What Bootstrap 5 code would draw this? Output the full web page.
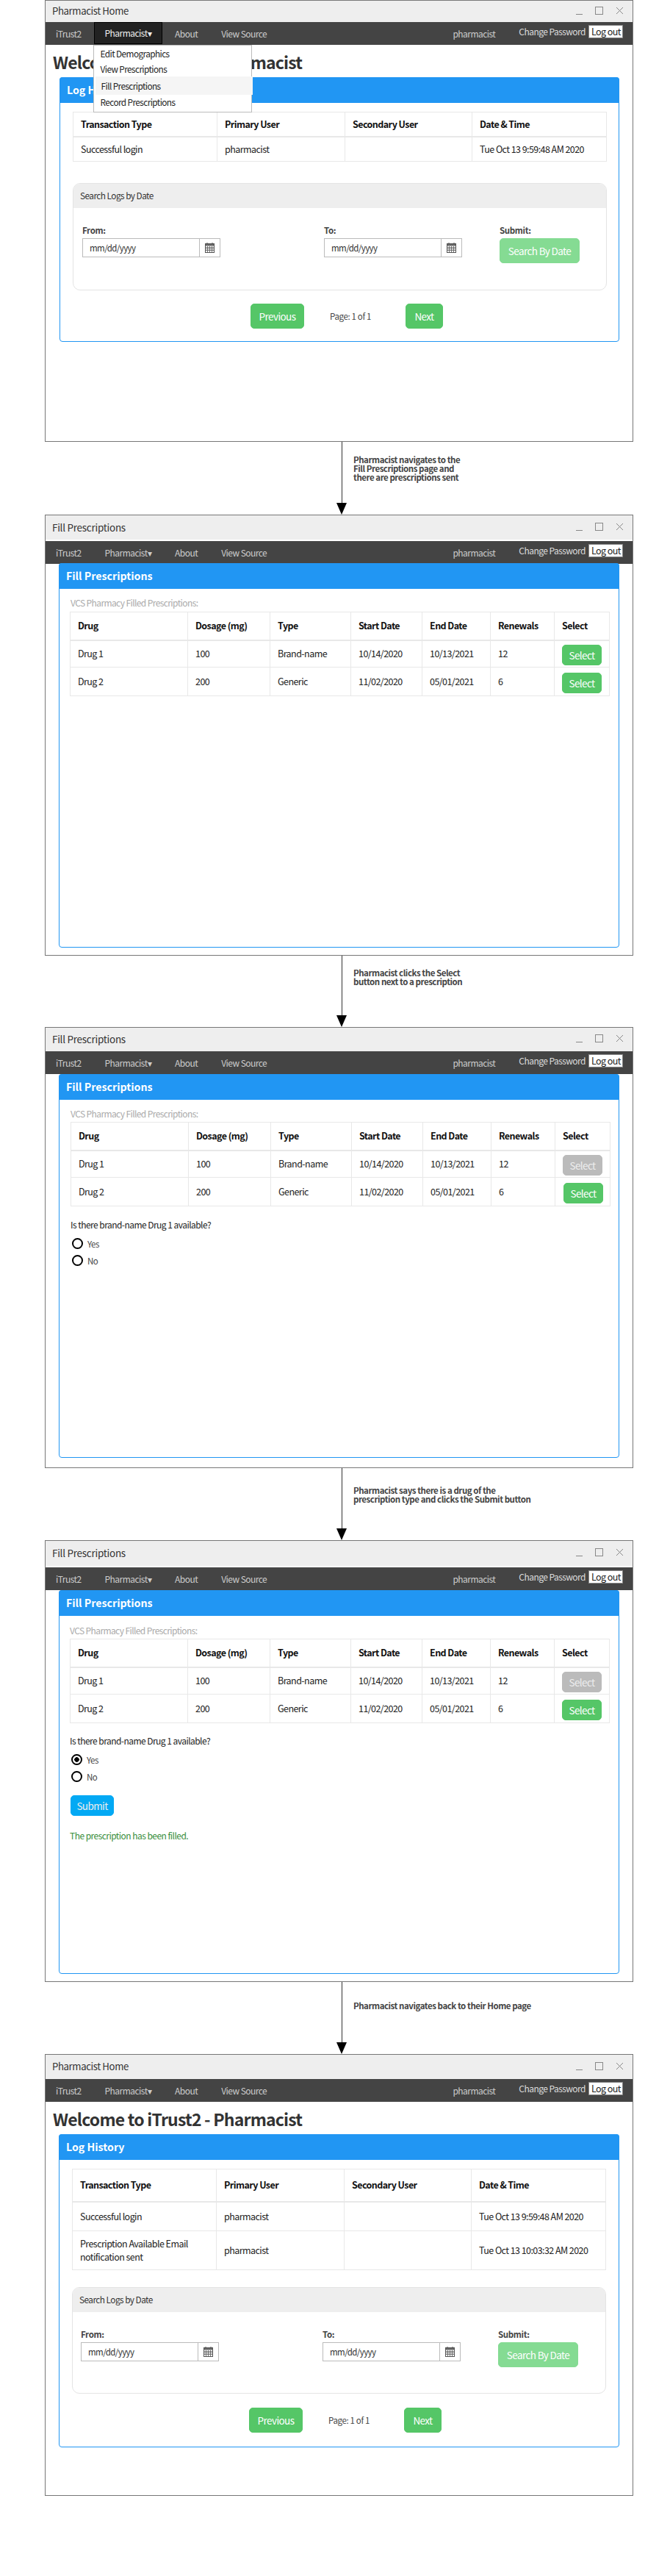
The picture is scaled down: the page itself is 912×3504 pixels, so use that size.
<!DOCTYPE html>
<html lang="en">
<head>
<meta charset="utf-8">
<title>iTrust2 flow</title>
<link href="https://cdn.jsdelivr.net/npm/bootstrap@5.3.0/dist/css/bootstrap.min.css" rel="stylesheet">
<style>
html,body{margin:0;background:#fff}
body{font-family:"Noto Sans CJK SC","Noto Sans",sans-serif;font-size:12px;line-height:18px;color:#222;width:912px;height:3504px;overflow:hidden}
body *{letter-spacing:-.045em}
.app-win{margin-left:61px;width:801px;border:1px solid #777;background:#fff;overflow:hidden}
.shot1{height:601px;--tb:29px;--gap:0px}
.shot2{height:600px;--tb:33px;--gap:2px}
.shot3{height:600px;--tb:32px;--gap:0px}
.shot4{height:601px;--tb:34px;--gap:2px}
.shot5{height:601px;--tb:33px;--gap:0px}
.win-title{height:var(--tb);margin-bottom:var(--gap);background:#eee;padding:0 12px 2px 9px;color:#333}
.win-title span{font-size:13.5px;letter-spacing:-.02em}
.shot1 .win-title span,.shot5 .win-title span{font-size:13.2px;letter-spacing:-.03em}
.win-nav{height:31px;background:#444;color:#ccc;position:relative}
.win-nav .nav-items{padding-left:14px}
.win-nav .nav-items .nav-link{padding:0;color:#ccc;line-height:31px;margin-right:32px;white-space:nowrap;font-size:12px}
.win-nav .nav-items .nav-link.is-open{color:#eee;background:#222;outline:1px solid #000;outline-offset:-1px;margin:0 17px 0 -15px;padding:0 15px;line-height:30px;height:30px}
.nav-side{padding-right:13px;margin-left:auto;align-items:center;font-size:12px}
.nav-user{color:#ccc;margin-right:32px;line-height:31px}
.nav-pass{color:#ddd;margin-right:4px;margin-top:-6px}
.nav-out{background:#fff;color:#222;border:1px solid #888;height:18px;line-height:16px;padding:0 3px;width:47px;font-size:12.5px;margin-top:-5px;white-space:nowrap}
.drop-wrap{position:relative}
.win-nav .drop-wrap .dropdown-menu{display:block;position:absolute;top:31px;left:-16px;width:216px;height:92px;margin:0;padding:0;border:1px solid #bbb;border-radius:0}
.drop-wrap .dropdown-item{padding:0 0 0 9px;color:#222;height:21px;line-height:21px;font-size:11.8px;letter-spacing:-.05em}
.drop-wrap .dropdown-item.is-hover{background:#f5f5f5;margin-left:2px;padding-left:8px;height:25px;line-height:25px}
.drop-wrap li:last-child .dropdown-item{margin-top:-1px}
.page-head{font-size:23px;font-weight:700;color:#333;line-height:30px;margin:0;padding-left:10px;letter-spacing:-.035em}
.shot1 .page-head,.shot5 .page-head{padding-top:8px;height:44px}
.log-box{margin-left:18px;width:763px;border:1px solid #2196f3;border-radius:4px;background:#fff}
.log-head{height:35px;background:#2196f3;color:#fff;font-weight:700;font-size:14.2px;letter-spacing:0;line-height:34px;padding-left:10px;margin:-1px -1px 0;border-radius:4px 4px 0 0}
.shot1 .log-box{height:360px;margin-left:19px;width:762px}
.shot5 .log-box{height:426px}
.shot2 .log-box{height:523px;margin-top:-1px}
.shot3 .log-box{height:522px}
.shot4 .log-box{height:522px}
.data-tbl{table-layout:fixed;border-collapse:collapse;margin:0;--bs-table-color:#222;--bs-table-border-color:#eee;width:auto}
.data-tbl th,.data-tbl td{padding:0 10px;vertical-align:middle;border:1px solid #e8e8e8;line-height:18px;font-size:12.5px;color:#222}
.data-tbl thead th{border-bottom-width:2px;color:#111;font-weight:700}
.log-tbl{width:726px;margin:12px 0 0 17px}
.log-tbl col:nth-child(1){width:196px}
.log-tbl col:nth-child(2){width:174px}
.log-tbl col:nth-child(3){width:173px}
.log-tbl col:nth-child(4){width:183px}
.shot1 .log-tbl thead tr{height:33px}
.shot1 .log-tbl tbody tr{height:34px}
.shot5 .log-tbl thead tr{height:44px}
.shot5 .log-tbl tbody tr:nth-child(1){height:40px}
.shot5 .log-tbl tbody tr:nth-child(2){height:53px}
.search-panel{margin-left:17px;width:727px;border:1px solid #e4e4e4;border-radius:10px;overflow:hidden}
.shot1 .search-panel{margin-top:29px;height:146px}
.shot5 .search-panel{margin-top:23px;height:145px}
.panel-head{height:33px;background:#eee;font-size:11.8px;line-height:32px;padding-left:9px;color:#333}
.field-row{padding:22px 0 0 12px}
.shot5 .field-row{padding-left:11px}
.field-a{width:329px}
.field-b{width:239px}
.field-lbl{font-size:11.5px;font-weight:700;color:#444;line-height:16px;height:19px;margin:0;display:block;letter-spacing:-.03em}
.date-grp{width:188px;height:26px;flex-wrap:nowrap}
.date-grp .form-control{height:26px;min-height:0;border:1px solid #bbb;border-radius:0;padding:0 9px;font-size:11.5px;letter-spacing:-.05em;color:#333;line-height:24px;box-shadow:none}
.date-grp .input-group-text{height:26px;width:29px;background:#fff;border:1px solid #bbb;border-radius:0;padding:0 0 0 7px}
.green-btn{--bs-btn-bg:#55c667;--bs-btn-border-color:#55c667;--bs-btn-color:#fff;--bs-btn-hover-bg:#55c667;--bs-btn-hover-color:#fff;padding:0;height:34px;line-height:32px;font-size:13.5px;border-radius:5px}
.green-btn.is-faded{background:#85db93;border-color:#85db93;color:#fff;opacity:1;width:109px}
.pager{margin-top:18px;padding-left:259px;align-items:center}
.shot5 .pager{margin-top:19px;padding-left:258px}
.pg-prev{width:73px}
.pg-next{width:51px}
.pg-label{font-size:11.5px;letter-spacing:-.03em;color:#444;width:138px;padding-left:35px;line-height:34px}
.rx-note{color:#aaa;font-size:12px;letter-spacing:-.05em;line-height:18px;margin:0;padding:10px 0 0 15px;height:31px}
.shot3 .rx-note{height:30px}
.shot4 .rx-note{height:31px;padding-top:11px;padding-left:14px}
.rx-tbl{width:734px;margin-left:14px}
.shot3 .rx-tbl{margin-left:15px}
.rx-tbl col:nth-child(1){width:160px}
.rx-tbl col:nth-child(2){width:112px}
.rx-tbl col:nth-child(3){width:110px}
.rx-tbl col:nth-child(4){width:97px}
.rx-tbl col:nth-child(5){width:93px}
.rx-tbl col:nth-child(6){width:87px}
.rx-tbl col:nth-child(7){width:75px}
.rx-tbl thead tr{height:38px}
.rx-tbl tbody tr:nth-child(1){height:37px}
.rx-tbl tbody tr:nth-child(2){height:39px}
.pick-btn{width:54px;height:28px;line-height:26px;display:block;margin-top:3px}
.pick-btn.is-used{background:#bbb;border-color:#bbb;color:#eee;opacity:1}
.shift-right{margin-left:1px}
.ask-wrap{padding:16px 0 0 15px}
.shot4 .ask-wrap{padding:15px 0 0 14px}
.ask-line{line-height:18px;margin:0 0 9px}
.pick-row{margin:0 0 8px;padding:0;min-height:0;display:flex;align-items:center;height:15px;font-size:11.5px;color:#444}
.pick-row .form-check-input{float:none;width:15px;height:15px;margin:0 6px 0 2px;border:2px solid #000;background:#fff;box-shadow:none;flex:none}
.pick-row .form-check-input:checked{background:radial-gradient(circle,#000 0 3px,#fff 3.5px);border-color:#000}
.send-btn{--bs-btn-bg:#03a9f4;--bs-btn-border-color:#03a9f4;--bs-btn-color:#eee;padding:0;width:59px;height:28px;line-height:26px;font-size:13.5px;border-radius:5px;margin:18px 0 0 1px;display:block}
.done-line{color:#388e3c;line-height:18px;margin:18px 0 0}
.flow-link{margin-left:458px;font-size:11.5px;line-height:12px;font-weight:700;color:#444}
.flow-a{height:99px}.flow-b{height:97px}.flow-c,.flow-d{height:98px}
.flow-axis{width:14px;align-items:center}
.flow-rule{width:1px;background:#333;flex:1 1 auto}
.flow-text{margin-left:9px;padding-top:18px;white-space:nowrap;letter-spacing:-.04em}
.flow-b .flow-text{padding-top:17px}
.flow-c .flow-text{padding-top:24px}
.flow-d .flow-text{padding-top:26px}
</style>
</head>
<body>

<section class="app-win shot1">
  <div class="win-title d-flex align-items-center justify-content-between"><span>Pharmacist Home</span>
    <svg width="66" height="12" viewBox="0 0 66 12" fill="none" stroke="#888"><path d="M1 10.5h9"/><rect x="27.5" y=".5" width="10" height="10"/><path d="M56 1l9 9M65 1l-9 9"/></svg>
  </div>
  <nav class="win-nav navbar navbar-expand p-0 flex-nowrap">
    <div class="navbar-nav nav-items flex-row">
      <a class="nav-link" href="#">iTrust2</a>
      <div class="drop-wrap">
        <a class="nav-link is-open" href="#">Pharmacist▾</a>
        <ul class="dropdown-menu show list-unstyled">
          <li><a class="dropdown-item" href="#">Edit Demographics</a></li>
          <li><a class="dropdown-item" href="#">View Prescriptions</a></li>
          <li><a class="dropdown-item is-hover" href="#">Fill Prescriptions</a></li>
          <li><a class="dropdown-item" href="#">Record Prescriptions</a></li>
        </ul>
      </div>
      <a class="nav-link" href="#">About</a>
      <a class="nav-link" href="#">View Source</a>
    </div>
    <div class="nav-side d-flex"><span class="nav-user">pharmacist</span><span class="nav-pass">Change Password</span><span class="nav-out">Log out</span></div>
  </nav>
  <h1 class="page-head">Welcome to iTrust2 - Pharmacist</h1>
  <div class="card log-box">
    <div class="log-head">Log History</div>
    <table class="table data-tbl log-tbl">
      <colgroup><col><col><col><col></colgroup>
      <thead><tr><th>Transaction Type</th><th>Primary User</th><th>Secondary User</th><th>Date &amp; Time</th></tr></thead>
      <tbody><tr><td>Successful login</td><td>pharmacist</td><td></td><td>Tue Oct 13 9:59:48 AM 2020</td></tr></tbody>
    </table>
    <div class="search-panel">
      <div class="panel-head">Search Logs by Date</div>
      <div class="field-row d-flex">
        <div class="field-a"><label class="field-lbl">From:</label>
          <div class="input-group date-grp"><input class="form-control" type="text" value="mm/dd/yyyy"><span class="input-group-text"><svg width="13" height="14" viewBox="0 0 13 14"><path d="M3 0v2M10 0v2" stroke="#555"/><rect x=".5" y="1.5" width="12" height="12" fill="#fff" stroke="#555"/><rect x="1" y="2" width="11" height="2.5" fill="#666"/><path d="M1 6.5h11M1 8.5h11M1 10.5h11M3.5 5v8M6.5 5v8M9.5 5v8" stroke="#666" stroke-width=".9"/></svg></span></div>
        </div>
        <div class="field-b"><label class="field-lbl">To:</label>
          <div class="input-group date-grp"><input class="form-control" type="text" value="mm/dd/yyyy"><span class="input-group-text"><svg width="13" height="14" viewBox="0 0 13 14"><path d="M3 0v2M10 0v2" stroke="#555"/><rect x=".5" y="1.5" width="12" height="12" fill="#fff" stroke="#555"/><rect x="1" y="2" width="11" height="2.5" fill="#666"/><path d="M1 6.5h11M1 8.5h11M1 10.5h11M3.5 5v8M6.5 5v8M9.5 5v8" stroke="#666" stroke-width=".9"/></svg></span></div>
        </div>
        <div><label class="field-lbl">Submit:</label><button class="btn green-btn is-faded" disabled>Search By Date</button></div>
      </div>
    </div>
    <div class="pager d-flex"><button class="btn green-btn pg-prev">Previous</button><span class="pg-label">Page: 1 of 1</span><button class="btn green-btn pg-next">Next</button></div>
  </div>
</section>

<div class="flow-link flow-a d-flex">
  <div class="flow-axis d-flex flex-column"><div class="flow-rule"></div><svg width="14" height="16" viewBox="0 0 14 16"><path d="M0 0h14L7 16z" fill="#000"/></svg></div>
  <div class="flow-text">Pharmacist navigates to the<br>Fill Prescriptions page and<br>there are prescriptions sent</div>
</div>

<section class="app-win shot2">
  <div class="win-title d-flex align-items-center justify-content-between"><span>Fill Prescriptions</span>
    <svg width="66" height="12" viewBox="0 0 66 12" fill="none" stroke="#888"><path d="M1 10.5h9"/><rect x="27.5" y=".5" width="10" height="10"/><path d="M56 1l9 9M65 1l-9 9"/></svg>
  </div>
  <nav class="win-nav navbar navbar-expand p-0 flex-nowrap">
    <div class="navbar-nav nav-items flex-row">
      <a class="nav-link" href="#">iTrust2</a><a class="nav-link" href="#">Pharmacist▾</a><a class="nav-link" href="#">About</a><a class="nav-link" href="#">View Source</a>
    </div>
    <div class="nav-side d-flex"><span class="nav-user">pharmacist</span><span class="nav-pass">Change Password</span><span class="nav-out">Log out</span></div>
  </nav>
  <div class="card log-box">
    <div class="log-head">Fill Prescriptions</div>
    <p class="rx-note">VCS Pharmacy Filled Prescriptions:</p>
    <table class="table data-tbl rx-tbl">
      <colgroup><col><col><col><col><col><col><col></colgroup>
      <thead><tr><th>Drug</th><th>Dosage (mg)</th><th>Type</th><th>Start Date</th><th>End Date</th><th>Renewals</th><th>Select</th></tr></thead>
      <tbody>
        <tr><td>Drug 1</td><td>100</td><td>Brand-name</td><td>10/14/2020</td><td>10/13/2021</td><td>12</td><td><button class="btn green-btn pick-btn">Select</button></td></tr>
        <tr><td>Drug 2</td><td>200</td><td>Generic</td><td>11/02/2020</td><td>05/01/2021</td><td>6</td><td><button class="btn green-btn pick-btn">Select</button></td></tr>
      </tbody>
    </table>
  </div>
</section>

<div class="flow-link flow-b d-flex">
  <div class="flow-axis d-flex flex-column"><div class="flow-rule"></div><svg width="14" height="16" viewBox="0 0 14 16"><path d="M0 0h14L7 16z" fill="#000"/></svg></div>
  <div class="flow-text">Pharmacist clicks the Select<br>button next to a prescription</div>
</div>

<section class="app-win shot3">
  <div class="win-title d-flex align-items-center justify-content-between"><span>Fill Prescriptions</span>
    <svg width="66" height="12" viewBox="0 0 66 12" fill="none" stroke="#888"><path d="M1 10.5h9"/><rect x="27.5" y=".5" width="10" height="10"/><path d="M56 1l9 9M65 1l-9 9"/></svg>
  </div>
  <nav class="win-nav navbar navbar-expand p-0 flex-nowrap">
    <div class="navbar-nav nav-items flex-row">
      <a class="nav-link" href="#">iTrust2</a><a class="nav-link" href="#">Pharmacist▾</a><a class="nav-link" href="#">About</a><a class="nav-link" href="#">View Source</a>
    </div>
    <div class="nav-side d-flex"><span class="nav-user">pharmacist</span><span class="nav-pass">Change Password</span><span class="nav-out">Log out</span></div>
  </nav>
  <div class="card log-box">
    <div class="log-head">Fill Prescriptions</div>
    <p class="rx-note">VCS Pharmacy Filled Prescriptions:</p>
    <table class="table data-tbl rx-tbl">
      <colgroup><col><col><col><col><col><col><col></colgroup>
      <thead><tr><th>Drug</th><th>Dosage (mg)</th><th>Type</th><th>Start Date</th><th>End Date</th><th>Renewals</th><th>Select</th></tr></thead>
      <tbody>
        <tr><td>Drug 1</td><td>100</td><td>Brand-name</td><td>10/14/2020</td><td>10/13/2021</td><td>12</td><td><button class="btn green-btn pick-btn is-used" disabled>Select</button></td></tr>
        <tr><td>Drug 2</td><td>200</td><td>Generic</td><td>11/02/2020</td><td>05/01/2021</td><td>6</td><td><button class="btn green-btn pick-btn shift-right">Select</button></td></tr>
      </tbody>
    </table>
    <div class="ask-wrap">
      <p class="ask-line">Is there brand-name Drug 1 available?</p>
      <div class="form-check pick-row"><input class="form-check-input" type="radio" name="a3"><label class="form-check-label">Yes</label></div>
      <div class="form-check pick-row"><input class="form-check-input" type="radio" name="a3"><label class="form-check-label">No</label></div>
    </div>
  </div>
</section>

<div class="flow-link flow-c d-flex">
  <div class="flow-axis d-flex flex-column"><div class="flow-rule"></div><svg width="14" height="16" viewBox="0 0 14 16"><path d="M0 0h14L7 16z" fill="#000"/></svg></div>
  <div class="flow-text">Pharmacist says there is a drug of the<br>prescription type and clicks the Submit button</div>
</div>

<section class="app-win shot4">
  <div class="win-title d-flex align-items-center justify-content-between"><span>Fill Prescriptions</span>
    <svg width="66" height="12" viewBox="0 0 66 12" fill="none" stroke="#888"><path d="M1 10.5h9"/><rect x="27.5" y=".5" width="10" height="10"/><path d="M56 1l9 9M65 1l-9 9"/></svg>
  </div>
  <nav class="win-nav navbar navbar-expand p-0 flex-nowrap">
    <div class="navbar-nav nav-items flex-row">
      <a class="nav-link" href="#">iTrust2</a><a class="nav-link" href="#">Pharmacist▾</a><a class="nav-link" href="#">About</a><a class="nav-link" href="#">View Source</a>
    </div>
    <div class="nav-side d-flex"><span class="nav-user">pharmacist</span><span class="nav-pass">Change Password</span><span class="nav-out">Log out</span></div>
  </nav>
  <div class="card log-box">
    <div class="log-head">Fill Prescriptions</div>
    <p class="rx-note">VCS Pharmacy Filled Prescriptions:</p>
    <table class="table data-tbl rx-tbl">
      <colgroup><col><col><col><col><col><col><col></colgroup>
      <thead><tr><th>Drug</th><th>Dosage (mg)</th><th>Type</th><th>Start Date</th><th>End Date</th><th>Renewals</th><th>Select</th></tr></thead>
      <tbody>
        <tr><td>Drug 1</td><td>100</td><td>Brand-name</td><td>10/14/2020</td><td>10/13/2021</td><td>12</td><td><button class="btn green-btn pick-btn is-used" disabled>Select</button></td></tr>
        <tr><td>Drug 2</td><td>200</td><td>Generic</td><td>11/02/2020</td><td>05/01/2021</td><td>6</td><td><button class="btn green-btn pick-btn">Select</button></td></tr>
      </tbody>
    </table>
    <div class="ask-wrap">
      <p class="ask-line">Is there brand-name Drug 1 available?</p>
      <div class="form-check pick-row"><input class="form-check-input" type="radio" name="a4" checked><label class="form-check-label">Yes</label></div>
      <div class="form-check pick-row"><input class="form-check-input" type="radio" name="a4"><label class="form-check-label">No</label></div>
      <button class="btn send-btn">Submit</button>
      <p class="done-line">The prescription has been filled.</p>
    </div>
  </div>
</section>

<div class="flow-link flow-d d-flex">
  <div class="flow-axis d-flex flex-column"><div class="flow-rule"></div><svg width="14" height="16" viewBox="0 0 14 16"><path d="M0 0h14L7 16z" fill="#000"/></svg></div>
  <div class="flow-text">Pharmacist navigates back to their Home page</div>
</div>

<section class="app-win shot5">
  <div class="win-title d-flex align-items-center justify-content-between"><span>Pharmacist Home</span>
    <svg width="66" height="12" viewBox="0 0 66 12" fill="none" stroke="#888"><path d="M1 10.5h9"/><rect x="27.5" y=".5" width="10" height="10"/><path d="M56 1l9 9M65 1l-9 9"/></svg>
  </div>
  <nav class="win-nav navbar navbar-expand p-0 flex-nowrap">
    <div class="navbar-nav nav-items flex-row">
      <a class="nav-link" href="#">iTrust2</a><a class="nav-link" href="#">Pharmacist▾</a><a class="nav-link" href="#">About</a><a class="nav-link" href="#">View Source</a>
    </div>
    <div class="nav-side d-flex"><span class="nav-user">pharmacist</span><span class="nav-pass">Change Password</span><span class="nav-out">Log out</span></div>
  </nav>
  <h1 class="page-head">Welcome to iTrust2 - Pharmacist</h1>
  <div class="card log-box">
    <div class="log-head">Log History</div>
    <table class="table data-tbl log-tbl">
      <colgroup><col><col><col><col></colgroup>
      <thead><tr><th>Transaction Type</th><th>Primary User</th><th>Secondary User</th><th>Date &amp; Time</th></tr></thead>
      <tbody>
        <tr><td>Successful login</td><td>pharmacist</td><td></td><td>Tue Oct 13 9:59:48 AM 2020</td></tr>
        <tr><td>Prescription Available Email notification sent</td><td>pharmacist</td><td></td><td>Tue Oct 13 10:03:32 AM 2020</td></tr>
      </tbody>
    </table>
    <div class="search-panel">
      <div class="panel-head">Search Logs by Date</div>
      <div class="field-row d-flex">
        <div class="field-a"><label class="field-lbl">From:</label>
          <div class="input-group date-grp"><input class="form-control" type="text" value="mm/dd/yyyy"><span class="input-group-text"><svg width="13" height="14" viewBox="0 0 13 14"><path d="M3 0v2M10 0v2" stroke="#555"/><rect x=".5" y="1.5" width="12" height="12" fill="#fff" stroke="#555"/><rect x="1" y="2" width="11" height="2.5" fill="#666"/><path d="M1 6.5h11M1 8.5h11M1 10.5h11M3.5 5v8M6.5 5v8M9.5 5v8" stroke="#666" stroke-width=".9"/></svg></span></div>
        </div>
        <div class="field-b"><label class="field-lbl">To:</label>
          <div class="input-group date-grp"><input class="form-control" type="text" value="mm/dd/yyyy"><span class="input-group-text"><svg width="13" height="14" viewBox="0 0 13 14"><path d="M3 0v2M10 0v2" stroke="#555"/><rect x=".5" y="1.5" width="12" height="12" fill="#fff" stroke="#555"/><rect x="1" y="2" width="11" height="2.5" fill="#666"/><path d="M1 6.5h11M1 8.5h11M1 10.5h11M3.5 5v8M6.5 5v8M9.5 5v8" stroke="#666" stroke-width=".9"/></svg></span></div>
        </div>
        <div><label class="field-lbl">Submit:</label><button class="btn green-btn is-faded" disabled>Search By Date</button></div>
      </div>
    </div>
    <div class="pager d-flex"><button class="btn green-btn pg-prev">Previous</button><span class="pg-label">Page: 1 of 1</span><button class="btn green-btn pg-next">Next</button></div>
  </div>
</section>

<script src="https://cdn.jsdelivr.net/npm/bootstrap@5.3.0/dist/js/bootstrap.bundle.min.js"></script>
</body>
</html>
